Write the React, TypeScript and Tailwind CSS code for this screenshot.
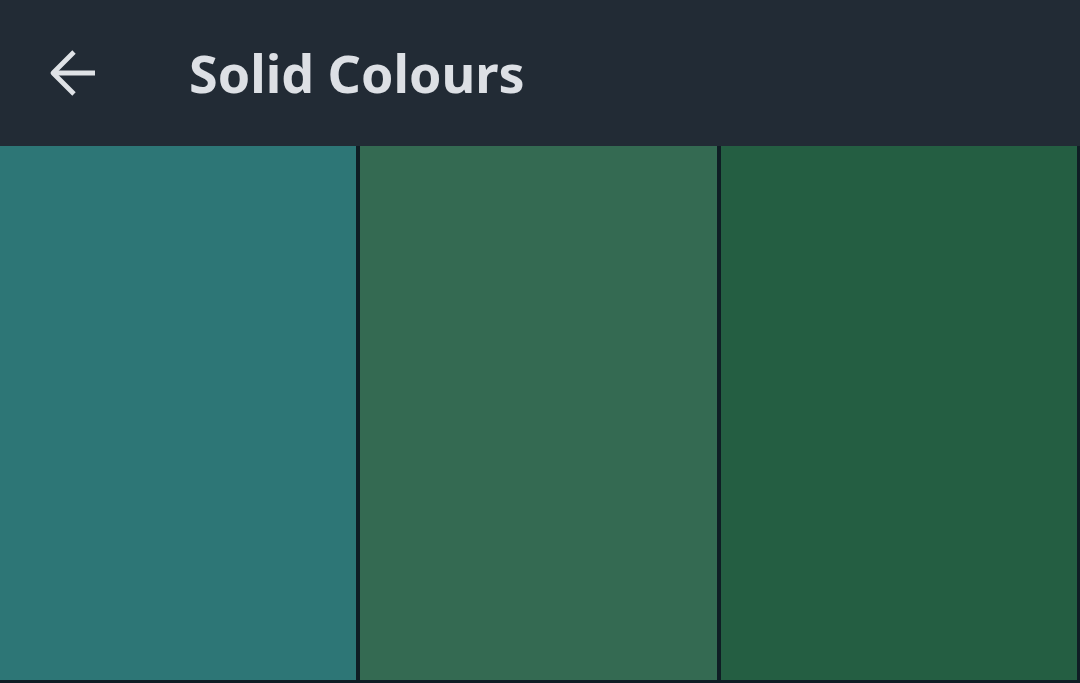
import { ArrowLeft } from 'lucide-react';

const swatches = ['#2d7676', '#346a52', '#245e42'];

export default function App() {
  return (
    <div className="flex h-[683px] w-[1080px] flex-col overflow-hidden bg-[#0f1d24] font-['Noto_Sans',sans-serif]">
      <header className="flex h-[146px] shrink-0 items-center bg-[#222b35]">
        <button className="ml-[38px] flex h-[72px] w-[72px] items-center justify-center text-[#dfe2e6]">
          <ArrowLeft size={72} strokeWidth={1.6} strokeLinecap="butt" />
        </button>
        <h1 className="ml-[79px] text-[52px] font-bold leading-none text-[#dde0e5]">
          Solid Colours
        </h1>
      </header>
      <div className="grid h-[534px] grid-cols-3 gap-[4px] pr-[3px]">
        {swatches.map((c) => (
          <div key={c} className="h-full" style={{ backgroundColor: c }} />
        ))}
      </div>
    </div>
  );
}
